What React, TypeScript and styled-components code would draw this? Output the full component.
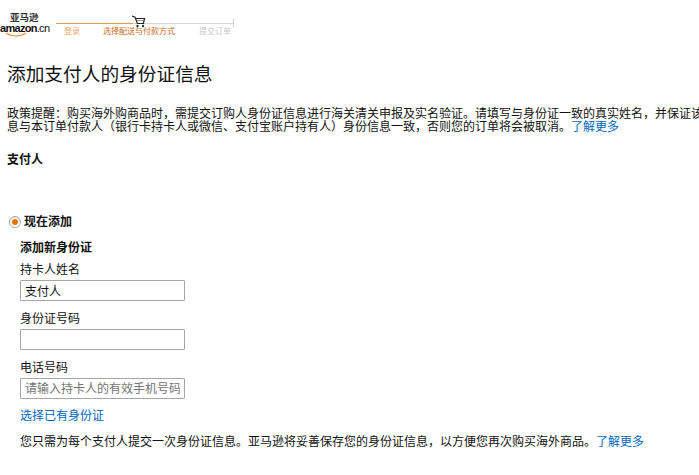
import React from "react";
import styled, { createGlobalStyle } from "styled-components";

const GlobalStyle = createGlobalStyle`
  html, body {
    margin: 0;
    padding: 0;
    background: #fff;
    overflow: hidden;
  }
  body {
    font-family: "Liberation Sans", "Noto Sans CJK SC", sans-serif;
    font-size: 12px;
    line-height: 13px;
    color: #111;
  }
`;

const Page = styled.div`
  width: 699px;
  height: 475px;
  overflow: hidden;
`;

const Header = styled.header`
  display: flex;
  height: 48px;
`;

const Logo = styled.div`
  position: relative;
  width: 56px;
  padding-top: 13px;
  flex: none;
`;

const LogoCn = styled.div`
  font-size: 9.5px;
  line-height: 10px;
  padding-left: 10px;
  font-weight: 700;
  color: #333;
  white-space: nowrap;
`;

const LogoLatin = styled.div`
  font-size: 11px;
  line-height: 10px;
  font-weight: 700;
  letter-spacing: -0.7px;
  white-space: nowrap;
  color: #111;
  span {
    font-weight: 400;
  }
`;

const Smile = styled.svg`
  position: absolute;
  left: 5px;
  top: 32px;
`;

const Steps = styled.div`
  position: relative;
  width: 178px;
  padding-top: 27px;
  display: flex;
`;

const Track = styled.div`
  position: absolute;
  left: 0;
  right: 0;
  top: 23px;
  height: 1px;
  background: linear-gradient(to right, #e59a4c 0 77px, #d4d4d4 77px);
`;

const TrackEnd = styled.div`
  position: absolute;
  right: 0;
  top: 19px;
  width: 1px;
  height: 8px;
  background: #ccc;
`;

const Cart = styled.svg`
  position: absolute;
  left: 75px;
  top: 15px;
`;

const Step = styled.span<{ $color: string; $width: number }>`
  flex: none;
  box-sizing: border-box;
  width: ${(p) => p.$width}px;
  padding-left: 8px;
  font-size: 8px;
  line-height: 10px;
  white-space: nowrap;
  color: ${(p) => p.$color};
`;

const Main = styled.main`
  padding: 13px 0 0 7px;
`;

const Title = styled.h1`
  margin: 0 0 19px;
  font-size: 18.7px;
  line-height: 28px;
  font-weight: 400;
  white-space: nowrap;
  color: #111;
`;

const Notice = styled.p`
  margin: 0 0 19px;
  width: 708px;
  font-size: 12px;
  line-height: 13px;
`;

const TextLink = styled.a`
  color: #0066c0;
  text-decoration: none;
`;

const Payer = styled.h3`
  margin: 0 0 47px;
  font-size: 12px;
  line-height: 14px;
  font-weight: 700;
`;

const RadioRow = styled.label`
  display: flex;
  align-items: center;
  gap: 3px;
  margin: 0 0 11px 2px;
  font-size: 12px;
  line-height: 16px;
  font-weight: 700;
`;

const RadioMark = styled.span`
  width: 12px;
  height: 12px;
  box-sizing: border-box;
  border: 1px solid #a6a6a6;
  border-radius: 50%;
  display: flex;
  align-items: center;
  justify-content: center;
  background: #fff;
  box-shadow: inset 0 1px 1px #ddd;
  &::after {
    content: "";
    width: 6px;
    height: 6px;
    border-radius: 50%;
    background: #e77600;
  }
`;

const Form = styled.section`
  padding-left: 13px;
`;

const FormTitle = styled.h4`
  margin: 0 0 8px;
  font-size: 12px;
  line-height: 14px;
  font-weight: 700;
`;

const FieldLabel = styled.label`
  display: block;
  font-size: 12px;
  line-height: 14px;
  margin-bottom: 3px;
`;

const Field = styled.div`
  margin-bottom: 11px;
`;

const Input = styled.input`
  display: block;
  box-sizing: border-box;
  width: 165px;
  height: 21px;
  padding: 0 4px;
  border: 1px solid #a6a6a6;
  border-radius: 1px;
  background: #fff;
  font-family: inherit;
  font-size: 12px;
  color: #111;
  outline: none;
  &::placeholder {
    color: #757575;
    opacity: 1;
  }
`;

const ChooseExisting = styled(TextLink)`
  display: block;
  line-height: 14px;
  margin: -1px 0 12px;
`;

const Footnote = styled.p`
  margin: 0;
  font-size: 12px;
  line-height: 14px;
  white-space: nowrap;
`;

export default function App() {
  return (
    <Page>
      <GlobalStyle />
      <Header>
        <Logo>
          <LogoCn>亚马逊</LogoCn>
          <LogoLatin>
            amazon<span>.cn</span>
          </LogoLatin>
          <Smile width="24" height="6" viewBox="0 0 24 6">
            <path d="M1 1c6 4 14 4 20 0" fill="none" stroke="#e8912d" strokeWidth="1.2" />
          </Smile>
        </Logo>
        <Steps>
          <Track />
          <TrackEnd />
          <Cart width="15" height="13" viewBox="0 0 15 13">
            <path d="M1 1l3 1.2 2.4 6.3h6l1.2-5H4.6" fill="none" stroke="#222" strokeWidth="1.2" />
            <path d="M5.5 5.5h7.6" fill="none" stroke="#666" strokeWidth="0.7" />
            <circle cx="6.5" cy="11" r="1.2" fill="#333" />
            <circle cx="12" cy="11" r="1.2" fill="#333" />
          </Cart>
          <Step $color="#e8a970" $width={39}>登录</Step>
          <Step $color="#c96a22" $width={96}>选择配送与付款方式</Step>
          <Step $color="#c8c8c8" $width={43}>提交订单</Step>
        </Steps>
      </Header>
      <Main>
        <Title>添加支付人的身份证信息</Title>
        <Notice>
          政策提醒：购买海外购商品时，需提交订购人身份证信息进行海关清关申报及实名验证。请填写与身份证一致的真实姓名，并保证该信息与本订单付款人（银行卡持卡人或微信、支付宝账户持有人）身份信息一致，否则您的订单将会被取消。<TextLink href="#">了解更多</TextLink>
        </Notice>
        <Payer>支付人</Payer>
        <RadioRow>
          <RadioMark />
          现在添加
        </RadioRow>
        <Form>
          <FormTitle>添加新身份证</FormTitle>
          <Field>
            <FieldLabel>持卡人姓名</FieldLabel>
            <Input defaultValue="支付人" />
          </Field>
          <Field>
            <FieldLabel>身份证号码</FieldLabel>
            <Input />
          </Field>
          <Field>
            <FieldLabel>电话号码</FieldLabel>
            <Input placeholder="请输入持卡人的有效手机号码" />
          </Field>
          <ChooseExisting href="#">选择已有身份证</ChooseExisting>
          <Footnote>
            您只需为每个支付人提交一次身份证信息。亚马逊将妥善保存您的身份证信息，以方便您再次购买海外商品。<TextLink href="#">了解更多</TextLink>
          </Footnote>
        </Form>
      </Main>
    </Page>
  );
}
